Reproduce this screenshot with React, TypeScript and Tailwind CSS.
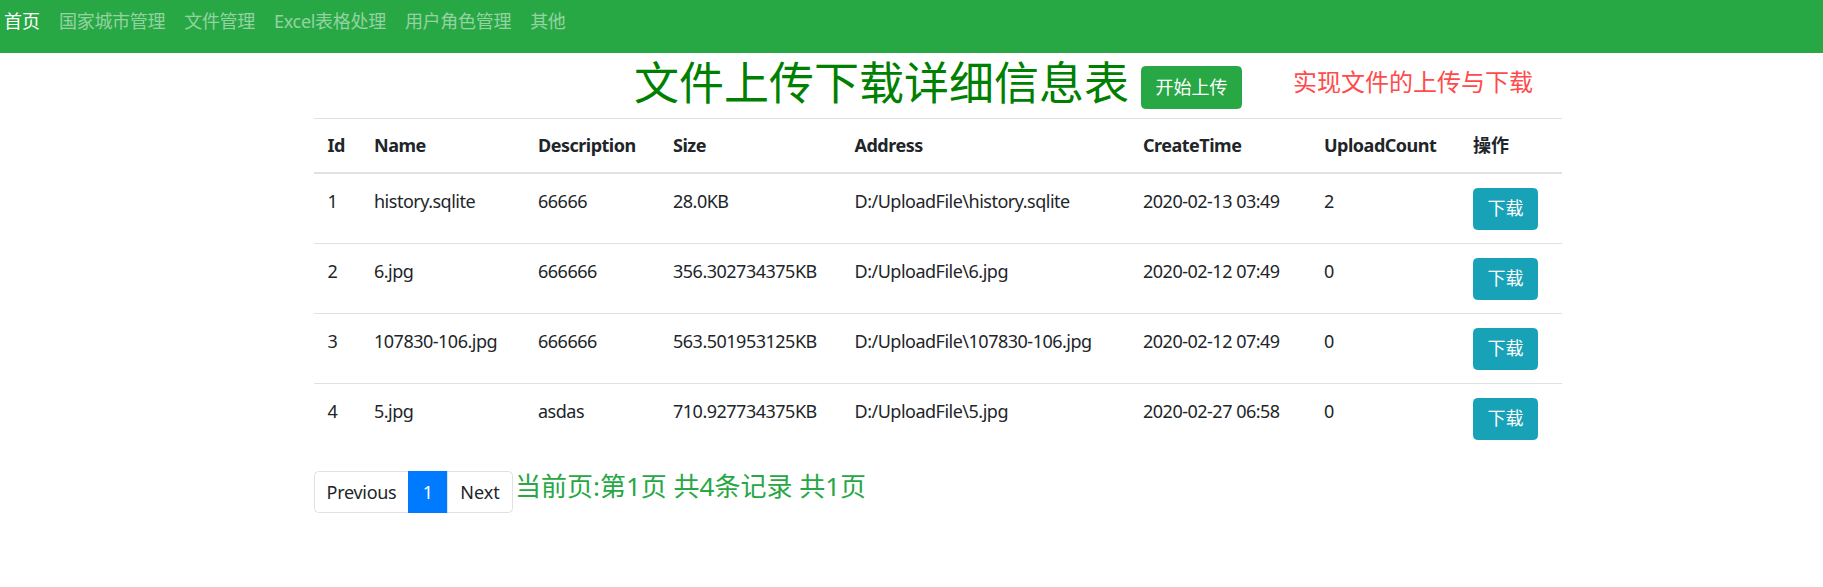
import React from "react";

const rows = [
  { id: 1, name: "history.sqlite", desc: "66666", size: "28.0KB", addr: "D:/UploadFile\\history.sqlite", time: "2020-02-13 03:49", count: 2 },
  { id: 2, name: "6.jpg", desc: "666666", size: "356.302734375KB", addr: "D:/UploadFile\\6.jpg", time: "2020-02-12 07:49", count: 0 },
  { id: 3, name: "107830-106.jpg", desc: "666666", size: "563.501953125KB", addr: "D:/UploadFile\\107830-106.jpg", time: "2020-02-12 07:49", count: 0 },
  { id: 4, name: "5.jpg", desc: "asdas", size: "710.927734375KB", addr: "D:/UploadFile\\5.jpg", time: "2020-02-27 06:58", count: 0 },
];

const navItems = ["国家城市管理", "文件管理", "Excel表格处理", "用户角色管理", "其他"];

export default function App() {
  return (
    <div
      className="min-h-[587px] w-full bg-white text-[#212529]"
      style={{ fontFamily: '"Noto Sans", "Noto Sans CJK SC", sans-serif' }}
    >
      <nav className="flex h-[53px] items-start gap-[19px] bg-[#28a745] pl-[4px] pt-[7.5px] text-[18px] leading-[27px]">
        <span className="text-white">首页</span>
        {navItems.map((t) => (
          <span key={t} className="text-[rgba(255,255,255,0.5)] tracking-[-0.3px]">
            {t}
          </span>
        ))}
      </nav>

      <div className="ml-[314px] w-[1248px]">
        <div className="flex h-[65px] items-start pl-[320px]">
          <h1 className="mt-[3px] text-[45px] font-normal leading-[54px] text-[#008000] whitespace-nowrap">
            文件上传下载详细信息表
          </h1>
          <button className="ml-[12px] mt-[13px] whitespace-nowrap rounded-[4.5px] border border-[#28a745] bg-[#28a745] px-[13.5px] py-[6.75px] text-[18px] leading-[27px] text-white">
            开始上传
          </button>
          <span className="ml-[51px] mt-[11px] whitespace-nowrap text-[24px] leading-[36px] text-[#ff4b4b]">
            实现文件的上传与下载
          </span>
        </div>

        <table className="w-full table-fixed border-collapse text-left text-[18px] leading-[27px] tracking-[-0.5px]">
          <thead>
            <tr className="border-t border-[#dee2e6]">
              <th className="w-[46.5px] border-b-2 border-[#dee2e6] px-[13.5px] py-[13px] font-bold">Id</th>
              <th className="w-[164px] border-b-2 border-[#dee2e6] px-[13.5px] py-[13px] font-bold">Name</th>
              <th className="w-[135px] border-b-2 border-[#dee2e6] px-[13.5px] py-[13px] font-bold">Description</th>
              <th className="w-[181.5px] border-b-2 border-[#dee2e6] px-[13.5px] py-[13px] font-bold">Size</th>
              <th className="w-[288.5px] border-b-2 border-[#dee2e6] px-[13.5px] py-[13px] font-bold">Address</th>
              <th className="w-[181px] border-b-2 border-[#dee2e6] px-[13.5px] py-[13px] font-bold">CreateTime</th>
              <th className="w-[149px] border-b-2 border-[#dee2e6] px-[13.5px] py-[13px] font-bold">UploadCount</th>
              <th className="w-[102.5px] border-b-2 border-[#dee2e6] px-[13.5px] py-[13px] font-bold tracking-normal">操作</th>
            </tr>
          </thead>
          <tbody>
            {rows.map((r, i) => (
              <tr key={r.id} className={i === 0 ? "" : "border-t border-[#dee2e6]"}>
                <td className="p-[13.5px] align-top">{r.id}</td>
                <td className="p-[13.5px] align-top whitespace-nowrap">{r.name}</td>
                <td className="p-[13.5px] align-top">{r.desc}</td>
                <td className="p-[13.5px] align-top whitespace-nowrap">{r.size}</td>
                <td className="p-[13.5px] align-top whitespace-nowrap">{r.addr}</td>
                <td className="p-[13.5px] align-top whitespace-nowrap">{r.time}</td>
                <td className="p-[13.5px] align-top">{r.count}</td>
                <td className="p-[13.5px] align-top">
                  <button className="whitespace-nowrap rounded-[4.5px] border border-[#17a2b8] bg-[#17a2b8] px-[13.5px] py-[6.5px] text-[18px] leading-[27px] tracking-normal text-white">
                    下载
                  </button>
                </td>
              </tr>
            ))}
          </tbody>
        </table>

        <div className="mt-[18px] flex items-start">
          <div className="flex text-[18px] leading-[22.5px]">
            <span className="flex h-[42px] w-[95px] items-center justify-center rounded-l-[4.5px] border border-[#dee2e6] bg-white text-[#212529] tracking-[-0.3px]">
              Previous
            </span>
            <span className="-ml-px flex h-[42px] w-[40px] items-center justify-center border border-[#007bff] bg-[#007bff] text-white">
              1
            </span>
            <span className="-ml-px flex h-[42px] w-[66px] items-center justify-center rounded-r-[4.5px] border border-[#dee2e6] bg-white text-[#212529]">
              Next
            </span>
          </div>
          <span className="ml-[2px] -mt-[3px] whitespace-nowrap text-[26px] leading-[36px] text-[#28a745]">
            当前页:第1页 共4条记录 共1页
          </span>
        </div>
      </div>
    </div>
  );
}
